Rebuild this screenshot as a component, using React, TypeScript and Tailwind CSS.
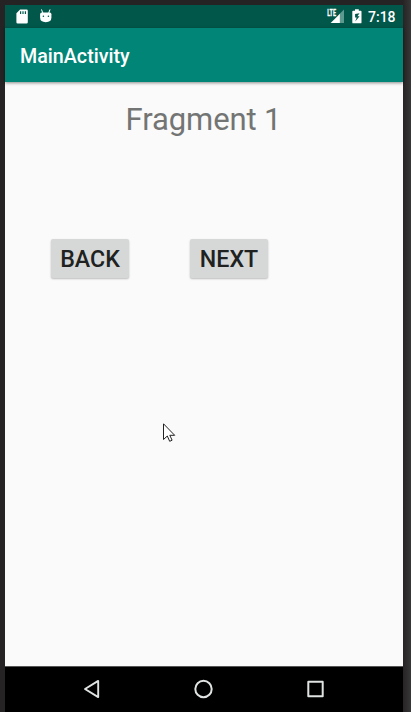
function SdCard() {
  return (
    <svg className="block" width="12" height="15" viewBox="0 0 12 15">
      <path fill="#fff" fillRule="evenodd" d="M4.1.5H10.6Q11.8.5 11.8 1.7V13.2Q11.8 14.5 10.5 14.5H1.7Q.4 14.5.4 13.2V4.3ZM4 2.2V4.9H5.2V2.2ZM6.4 2.2V4.9H7.6V2.2ZM8.8 2.2V4.9H10V2.2Z" />
    </svg>
  );
}

function DroidHead() {
  return (
    <svg className="block" width="12" height="14" viewBox="0 0 12 14">
      <path stroke="#fff" strokeWidth="1" strokeLinecap="round" d="M1.6.8L2.8 4M9.9.8L8.7 4" />
      <path fill="#fff" d="M.1 5.2Q.1 3.6 1.7 3.6H9.8Q11.4 3.6 11.4 5.2V8.6Q11.4 13.2 5.8 13.2Q.1 13.2.1 8.6Z" />
      <circle cx="3.4" cy="7.2" r=".8" fill="#01574a" />
      <circle cx="8.4" cy="7.2" r=".8" fill="#01574a" />
    </svg>
  );
}

function Signal() {
  return (
    <svg className="block overflow-visible" width="18" height="15" viewBox="0 0 18 15">
      <path fill="#5c9a90" d="M17 .6V14H12V5.6Z" />
      <path fill="#fff" d="M12.8 4.8V14H3.6L10.2 7.4Z" />
      <text transform="translate(.3 6.5) scale(.7 1)" fill="#fff" stroke="#fff" strokeWidth=".3" fontFamily="Roboto, sans-serif" fontWeight="700" fontSize="8.4" textLength="12.4" lengthAdjust="spacingAndGlyphs">LTE</text>
    </svg>
  );
}

function Battery() {
  return (
    <svg className="block" width="10" height="15" viewBox="0 0 10 15">
      <path fill="#fff" d="M3 .3H6.8V1.7H8.7Q9.5 1.7 9.5 2.5V13.4Q9.5 14.3 8.7 14.3H1.1Q.3 14.3.3 13.4V2.5Q.3 1.7 1.1 1.7H3Z" />
      <path fill="#01574a" d="M7.5 4.2L3.1 5V8.5H4.7L3.2 12.4L7.6 7.3H5.4Z" />
    </svg>
  );
}

function ActionButton({ label }: { label: string }) {
  return (
    <button className="h-[39px] w-[78px] rounded-xs bg-[#d6d8d7] text-center text-[23.2px] leading-[41px] font-medium text-[#202221] shadow-[0_1px_2px_rgba(0,0,0,0.25)]">
      {label}
    </button>
  );
}

export default function App() {
  return (
    <div className="relative flex h-[712px] w-[411px] flex-col overflow-hidden bg-[#252324] bg-linear-to-r from-[#252324] from-98% to-[#383737] pt-[5px] pr-2 pl-[5px] font-['Roboto',sans-serif]">
      <header className="flex h-[23px] shrink-0 items-start bg-[#01574a] pt-1 pr-[7px] pl-[11px]">
        <SdCard />
        <div className="ml-3"><DroidHead /></div>
        <div className="ml-auto flex items-start">
          <Signal />
          <div className="ml-[7px]"><Battery /></div>
          <span className="ml-1.5 w-[28px] text-[14px] leading-4 font-medium whitespace-nowrap text-white">7:18</span>
        </div>
      </header>
      <div className="z-10 flex h-[54px] shrink-0 items-center bg-[#018577] pl-[15px] shadow-[0_1px_3px_rgba(0,0,0,0.45)]">
        <h1 className="pt-[3px] text-[19.7px] leading-6 font-medium text-white">MainActivity</h1>
      </div>
      <main className="flex grow flex-col bg-[#fafafa]">
        <h2 className="mt-[18px] pr-px text-center text-[31px] leading-10 tracking-[-0.1px] text-[#737574]">Fragment 1</h2>
        <div className="mt-[99px] flex gap-[61px] pl-[46px]">
          <ActionButton label="BACK" />
          <ActionButton label="NEXT" />
        </div>
      </main>
      <nav className="flex h-[46px] shrink-0 items-center border-t border-[#555] bg-black pb-px pl-[77px]">
        <svg width="18" height="20" viewBox="0 0 18 20" fill="none" stroke="#dfe3e1" strokeWidth="1.9" strokeLinejoin="round"><path d="M16.2 1.9V18.1L3 10Z" /></svg>
        <svg className="ml-[93px]" width="20" height="20" viewBox="0 0 20 20" fill="none" stroke="#dfe3e1" strokeWidth="2"><circle cx="10.5" cy="10" r="8.2" /></svg>
        <svg className="ml-[92px]" width="20" height="20" viewBox="0 0 20 20" fill="none" stroke="#dfe3e1" strokeWidth="2" strokeLinejoin="round"><path d="M3.3 2.8H17.7V17.2H3.3Z" /></svg>
      </nav>
      <svg className="absolute top-[423px] left-[163px]" width="13" height="20" viewBox="0 0 13 20">
        <path fill="#fff" stroke="#222" strokeWidth="1" d="M.5.8V16.5L4.3 13L6.7 18.3L9.1 17.2L6.8 12.3H11.7Z" />
      </svg>
    </div>
  );
}
